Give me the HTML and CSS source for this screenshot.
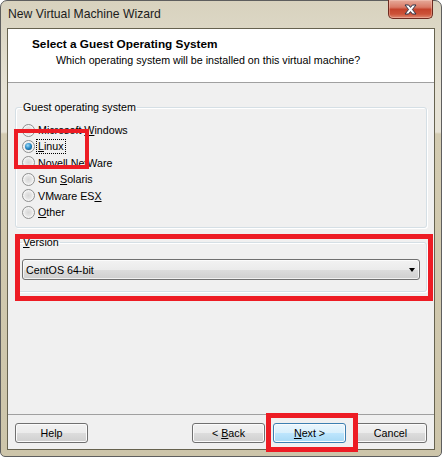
FILE: index.html
```html
<!DOCTYPE html>
<html>
<head>
<meta charset="utf-8">
<title>New Virtual Machine Wizard</title>
<link rel="stylesheet" href="styles.css">
</head>
<body>
<div class="window">
  <div class="titlebar">
    <span class="title">New Virtual Machine Wizard</span>
    <button class="close" aria-label="Close">
      <svg width="13" height="11" viewBox="0 0 13 11"><path d="M1 1 H4.6 L6.5 3.4 L8.4 1 H12 L8.4 5.5 L12 10 H8.4 L6.5 7.6 L4.6 10 H1 L4.6 5.5 Z" fill="#fff" stroke="#2f3346" stroke-width="1" stroke-linejoin="round"/></svg>
    </button>
  </div>
  <div class="client">
    <div class="header">
      <div class="h-title">Select a Guest Operating System</div>
      <div class="h-sub">Which operating system will be installed on this virtual machine?</div>
    </div>
    <div class="content">
      <fieldset class="group group-os">
        <legend>Guest operating system</legend>
        <div class="radio-row"><span class="radio"></span><span>Microsoft <u>W</u>indows</span></div>
        <div class="radio-row"><span class="radio checked"></span><span class="focus"><u>L</u>inux</span></div>
        <div class="radio-row"><span class="radio"></span><span>Novell NetWare</span></div>
        <div class="radio-row"><span class="radio"></span><span>Sun <u>S</u>olaris</span></div>
        <div class="radio-row"><span class="radio"></span><span>VMware ES<u>X</u></span></div>
        <div class="radio-row"><span class="radio"></span><span><u>O</u>ther</span></div>
      </fieldset>
      <fieldset class="group group-ver">
        <legend><u>V</u>ersion</legend>
        <div class="combo"><span>CentOS 64-bit</span><span class="arrow"></span></div>
      </fieldset>
    </div>
    <div class="footer">
      <button class="btn">Help</button>
      <span class="spacer"></span>
      <button class="btn">&lt; <u>B</u>ack</button>
      <button class="btn btn-default"><u>N</u>ext &gt;</button>
      <button class="btn">Cancel</button>
    </div>
  </div>
  <div class="mark mark-linux"></div>
  <div class="mark mark-version"></div>
  <div class="mark mark-next"></div>
</div>
</body>
</html>
```

FILE: styles.css
```css
* { box-sizing: border-box; }
html, body { margin: 0; padding: 0; }
body {
  width: 442px;
  height: 457px;
  overflow: hidden;
  background: #fff;
  font-family: "Liberation Sans", Arial, sans-serif;
  font-size: 10.7px;
  color: #000;
}
.window {
  position: relative;
  width: 442px;
  height: 457px;
  border: 1px solid #5e5e5e;
  border-radius: 7px 7px 5px 5px;
  padding: 0 6px 6px;
  display: flex;
  flex-direction: column;
  background: linear-gradient(to bottom, #d8d2be 0, #dcd7c5 28px, #e6e2d5 90px, #e6e2d5 131px, #d3cbb1 133px, #cdc5aa 100%);
}
.titlebar {
  height: 27px;
  flex: none;
  display: flex;
  align-items: flex-start;
  padding-left: 1px;
}
.title {
  flex: 1;
  line-height: 27px;
  font-size: 12.2px;
  color: #1c1c1c;
}
.close {
  margin-top: -1px;
  margin-right: 2px;
  width: 45px;
  height: 19px;
  padding: 0;
  border: 1px solid #6e2a1f;
  border-top: none;
  border-radius: 0 0 5px 5px;
  background: linear-gradient(to bottom, #e6aa9a 0, #d97a66 40%, #c4432c 52%, #cc5238 78%, #de8a72 100%);
  box-shadow: inset 0 0 0 1px rgba(255, 220, 210, 0.35);
  display: flex;
  align-items: center;
  justify-content: center;
}
.close svg { display: block; }
.client {
  flex: 1;
  border: 1px solid #66624f;
  background: #f0f0f0;
  display: flex;
  flex-direction: column;
}
.header {
  height: 54px;
  flex: none;
  background: #fff;
  border-bottom: 1px solid #a0a0a0;
  padding: 8px 0 0 24px;
}
.h-title {
  font-weight: bold;
  font-size: 11.8px;
  line-height: 15px;
}
.h-sub {
  margin-left: 24px;
  line-height: 16px;
}
.content {
  flex: 1;
}
.group {
  margin: 0 7px;
  padding: 8px 6px 7px;
  border: 1px solid #d5dfe5;
  border-radius: 3px;
  box-shadow: inset 1px 1px 0 #fff, 1px 1px 0 #fff;
  min-width: 0;
}
.group legend {
  padding: 0 1px;
  line-height: 13px;
}
.group-os { margin-top: 18px; }
.group-ver {
  margin-top: 8px;
  padding-top: 10px;
  padding-bottom: 11px;
}
.radio-row {
  display: flex;
  align-items: center;
  gap: 3px;
  height: 16.4px;
}
.radio {
  flex: none;
  width: 13px;
  height: 13px;
  border-radius: 50%;
  border: 1px solid #8e8f8f;
  background: radial-gradient(circle at 50% 50%, #d6d6d6 0, #e6e6e6 45%, #f7f7f7 70%, #fdfdfd 100%);
  box-shadow: inset 0 0 0 1px #f4f4f4;
  display: flex;
  align-items: center;
  justify-content: center;
}
.radio.checked::after {
  content: "";
  width: 7px;
  height: 7px;
  border-radius: 50%;
  background: radial-gradient(circle at 40% 35%, #9edcf8 0, #2f8fcb 45%, #0d5a8c 80%, #0b4670 100%);
}
.focus {
  outline: 1px dotted #000;
  outline-offset: 0;
  padding: 0 1px;
  margin-left: -1px;
  line-height: 13px;
}
.combo {
  height: 21px;
  border: 1px solid #707070;
  border-radius: 3px;
  background: linear-gradient(to bottom, #f2f2f2 0, #ebebeb 50%, #dddddd 50%, #cfcfcf 100%);
  box-shadow: inset 0 0 0 1px rgba(255, 255, 255, 0.7);
  display: flex;
  align-items: center;
  justify-content: space-between;
  padding: 0 4px 0 3px;
}
.arrow {
  width: 0;
  height: 0;
  border-left: 3.5px solid transparent;
  border-right: 3.5px solid transparent;
  border-top: 4px solid #000;
}
.footer {
  flex: none;
  display: flex;
  gap: 8px;
  border-top: 1px solid #a0a0a0;
  padding: 8px 7px 6px;
}
.spacer { flex: 1; }
.btn {
  width: 73px;
  height: 20px;
  padding: 0;
  border: 1px solid #707070;
  border-radius: 3px;
  background: linear-gradient(to bottom, #f2f2f2 0, #ebebeb 50%, #dddddd 50%, #cfcfcf 100%);
  box-shadow: inset 0 0 0 1px #fbfbfb;
  font: inherit;
  color: #000;
}
.btn-default {
  border-color: #3c7fb1;
  background: linear-gradient(to bottom, #eaf6fd 0, #d9f0fc 50%, #bee6fd 50%, #a7d9f5 100%);
}
.mark {
  position: absolute;
  border: 4px solid #ed1c24;
}
.mark-linux { left: 13px; top: 128px; width: 75px; height: 40px; }
.mark-version { left: 14px; top: 233px; width: 418px; height: 67px; border-width: 5px; }
.mark-next { left: 265px; top: 412px; width: 92px; height: 39px; border-width: 5px; }
```
